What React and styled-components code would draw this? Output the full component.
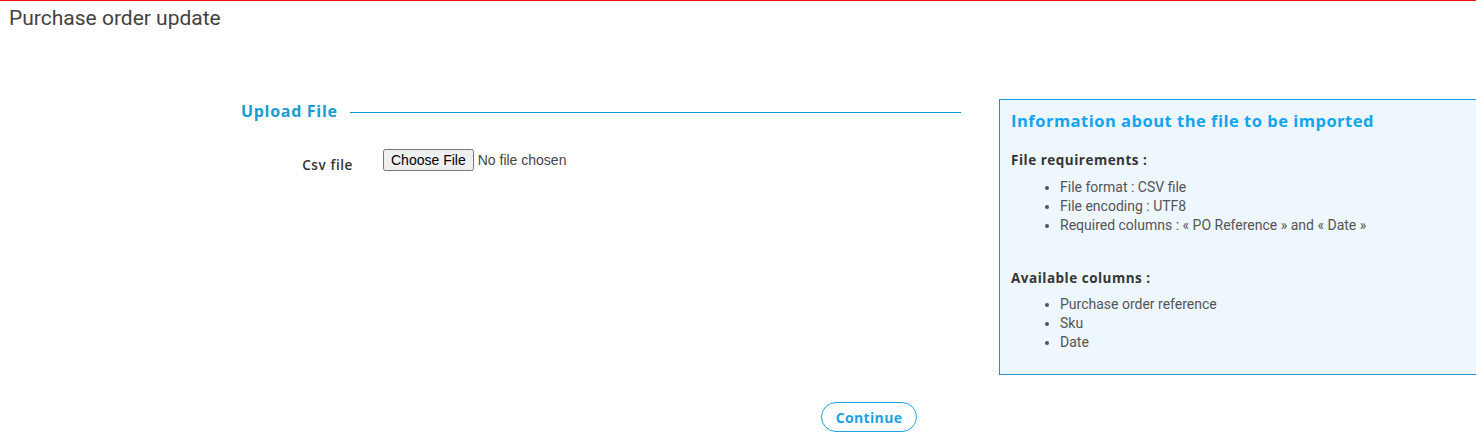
import React from "react";
import styled, { createGlobalStyle } from "styled-components";

const Global = createGlobalStyle`
  html, body { margin: 0; padding: 0; overflow: hidden; background: #fff; }
  body { border-top: 1px solid #ee1111; font-family: Roboto, "Liberation Sans", sans-serif; }
`;

const Title = styled.h1`
  margin: 0;
  padding: 5px 9px;
  font-family: Roboto, sans-serif;
  font-weight: 400;
  font-size: 21px;
  line-height: 24px;
  color: #454141;
`;

const Main = styled.div`
  display: flex;
  align-items: flex-start;
  gap: 38px;
  margin-top: 64px;
  padding-left: 241px;
`;

const UploadSection = styled.section`
  width: 720px;
  flex-shrink: 0;
`;

const Legend = styled.div`
  display: flex;
  align-items: center;
  gap: 12px;
`;

const LegendText = styled.span`
  font-family: "Open Sans", sans-serif;
  font-weight: 700;
  font-size: 16px;
  line-height: 24px;
  color: #1a9ad6;
  letter-spacing: 0.7px;
`;

const LegendLine = styled.span`
  flex: 1;
  height: 1px;
  background: #0d98d8;
  margin-top: 2px;
`;

const FormRow = styled.div`
  display: flex;
  align-items: flex-start;
  gap: 30px;
  margin-top: 26px;
`;

const Label = styled.label`
  width: 112px;
  text-align: right;
  padding-top: 6px;
  font-family: "Open Sans", sans-serif;
  font-weight: 600;
  font-size: 13.5px;
  line-height: 20px;
  letter-spacing: 0.6px;
  color: #333;
`;

const FileInput = styled.input`
  font-family: "Liberation Sans", Arial, sans-serif;
  font-size: 14px;
  color: #444;
  margin: 0;
`;

const InfoBox = styled.aside`
  width: 478px;
  flex-shrink: 0;
  box-sizing: border-box;
  background: #eef6fe;
  border: 1px solid #2a8bc9;
  border-top-color: #06a3ea;
  padding: 10px 11px 22px;
`;

const InfoTitle = styled.h2`
  margin: 0;
  font-family: "Open Sans", sans-serif;
  font-weight: 700;
  font-size: 16.5px;
  line-height: 22px;
  color: #12a5ef;
  letter-spacing: 0.5px;
`;

const SubHeading = styled.h3`
  margin: ${(p) => p.$top}px 0 0;
  font-family: "Open Sans", sans-serif;
  font-weight: 700;
  font-size: 13.5px;
  line-height: 19px;
  letter-spacing: 0.5px;
  color: #353535;
`;

const List = styled.ul`
  margin: ${(p) => p.$top}px 0 0;
  padding-left: 49px;
  font-family: Roboto, sans-serif;
  font-size: 14px;
  line-height: 19px;
  color: #555;
`;

const Footer = styled.div`
  display: flex;
  justify-content: center;
  padding-left: 262px;
  margin-top: 27px;
`;

const ContinueButton = styled.button`
  height: 30px;
  padding: 0 14px;
  border: 1px solid #1aa3e8;
  border-radius: 15px;
  background: #fff;
  font-family: "Open Sans", sans-serif;
  font-weight: 700;
  font-size: 14px;
  letter-spacing: 0.35px;
  color: #1aa3e8;
  cursor: pointer;
`;

export default function App() {
  return (
    <>
      <Global />
      <Title>Purchase order update</Title>
      <Main>
        <UploadSection>
          <Legend>
            <LegendText>Upload File</LegendText>
            <LegendLine />
          </Legend>
          <FormRow>
            <Label htmlFor="csv">Csv file</Label>
            <FileInput id="csv" type="file" />
          </FormRow>
        </UploadSection>
        <InfoBox>
          <InfoTitle>Information about the file to be imported</InfoTitle>
          <SubHeading $top={19}>File requirements :</SubHeading>
          <List $top={8}>
            <li>File format : CSV file</li>
            <li>File encoding : UTF8</li>
            <li>Required columns : « PO Reference » and « Date »</li>
          </List>
          <SubHeading $top={34}>Available columns :</SubHeading>
          <List $top={7}>
            <li>Purchase order reference</li>
            <li>Sku</li>
            <li>Date</li>
          </List>
        </InfoBox>
      </Main>
      <Footer>
        <ContinueButton>Continue</ContinueButton>
      </Footer>
    </>
  );
}
